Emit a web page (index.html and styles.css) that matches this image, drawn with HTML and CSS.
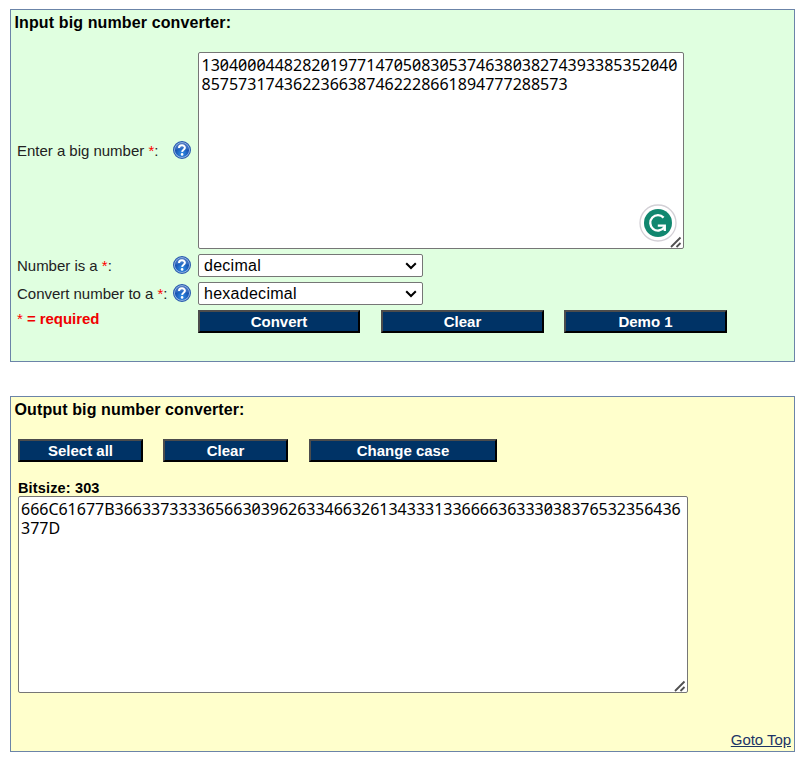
FILE: index.html
```html
<!DOCTYPE html>
<html lang="en">
<head>
<meta charset="utf-8">
<title>Big number converter</title>
<link rel="stylesheet" href="styles.css">
</head>
<body>
<svg class="defs" width="0" height="0">
  <defs>
    <radialGradient id="ball" cx="50%" cy="75%" r="70%">
      <stop offset="0" stop-color="#2f8fe8"/>
      <stop offset="1" stop-color="#0d3798"/>
    </radialGradient>
    <linearGradient id="shine" x1="0" y1="0" x2="0" y2="1">
      <stop offset="0" stop-color="#9cc4ef"/>
      <stop offset="1" stop-color="#3d7cd2"/>
    </linearGradient>
  </defs>
  <symbol id="help" viewBox="0 0 18 18">
    <circle cx="9" cy="9" r="8.4" fill="#a9c9f0" stroke="#2a5cae" stroke-width="1.2"/>
    <circle cx="9" cy="9" r="7.1" fill="url(#ball)"/>
    <path d="M2 9a7 7 0 0 1 14 0Q9 6 2 9z" fill="url(#shine)" opacity=".5"/>
    <path d="M6 7C6 3.4 12 3.5 11.9 6.8C11.8 8.8 9.2 8.7 9.1 10.9" fill="none" stroke="#fff" stroke-width="2"/>
    <circle cx="9.1" cy="13.4" r="1.3" fill="#fff"/>
  </symbol>
  <symbol id="grip" viewBox="0 0 12 12">
    <path d="M1 11L10.5 1.5M6.5 11L10.5 7" fill="none" stroke="#505050" stroke-width="1.8"/>
  </symbol>
</svg>

<form class="panel input-panel">
  <h2>Input big number converter:</h2>
  <div class="fields">
    <label class="number-label" for="number">Enter a big number <i>*</i>:</label>
    <svg class="help first"><use href="#help"/></svg>
    <div class="area">
      <textarea id="number" class="number" spellcheck="false">13040004482820197714705083053746380382743933853520408575731743622366387462228661894777288573</textarea>
      <svg class="badge" viewBox="0 0 38 38">
        <circle cx="19" cy="19" r="18" fill="#fff" stroke="#d3d0d6" stroke-width="1.3"/>
        <circle cx="19" cy="19" r="14" fill="#11876f"/>
        <path d="M24.6 13.6A7.7 7.7 0 1 0 25.2 23.4M18.8 21.6H25.8V27" fill="none" stroke="#fff" stroke-width="2.3"/>
      </svg>
      <svg class="grip"><use href="#grip"/></svg>
    </div>

    <label class="short" for="from">Number is a <i>*</i>:</label>
    <svg class="help"><use href="#help"/></svg>
    <div class="picker">
      <select id="from"><option>decimal</option></select>
      <svg class="chevron" viewBox="0 0 12 8"><path d="M1.2 1.2L6 6L10.8 1.2" fill="none" stroke="#000" stroke-width="2"/></svg>
    </div>

    <label class="short" for="to">Convert number to a <i>*</i>:</label>
    <svg class="help"><use href="#help"/></svg>
    <div class="picker">
      <select id="to"><option>hexadecimal</option></select>
      <svg class="chevron" viewBox="0 0 12 8"><path d="M1.2 1.2L6 6L10.8 1.2" fill="none" stroke="#000" stroke-width="2"/></svg>
    </div>

    <p class="required"><i>*</i> = required</p>
    <div class="actions">
      <button type="button">Convert</button>
      <button type="button">Clear</button>
      <button type="button">Demo 1</button>
    </div>
  </div>
</form>

<section class="panel output-panel">
  <h2>Output big number converter:</h2>
  <div class="tools">
    <button type="button">Select all</button>
    <button type="button">Clear</button>
    <button type="button" class="wide">Change case</button>
  </div>
  <p class="bitsize">Bitsize: 303</p>
  <div class="area result-area">
    <textarea class="result" spellcheck="false">666C61677B36633733336566303962633466326134333133666636333038376532356436377D</textarea>
    <svg class="grip"><use href="#grip"/></svg>
  </div>
  <a class="top" href="#">Goto Top</a>
</section>
</body>
</html>
```
FILE: styles.css
```css
* { box-sizing: border-box; }

body {
  margin: 0;
  padding: 9px 7px 0 10px;
  background: #fff;
  color: #000;
  font: 15px/18px "Liberation Sans", Arial, sans-serif;
}

.defs { position: absolute; }

.panel {
  display: flex;
  flex-direction: column;
  border: 1px solid #6b84a8;
}

.input-panel {
  height: 353px;
  padding: 3px;
  background: #e0ffe0;
}

.output-panel {
  height: 356px;
  margin-top: 34px;
  padding: 3px;
  background: #ffffcc;
}

h2 {
  margin: 0;
  padding-left: 0.5px;
  font-size: 16px;
  line-height: 19px;
  letter-spacing: 0.12px;
}

i { color: #f00; font-style: normal; }

.fields {
  display: grid;
  grid-template-columns: 156px 28px 1fr;
  grid-template-rows: 197px 24px 24px 24px;
  row-gap: 4px;
  align-items: center;
  margin: 20px 0 0 3px;
}

.fields label { color: #222; white-space: nowrap; letter-spacing: -0.02px; }
.fields .short { padding-top: 2px; }
.help { display: block; width: 18px; height: 18px; }
.help.first { margin-bottom: 2px; }

.area { position: relative; }

textarea {
  display: block;
  width: 100%;
  height: 197px;
  margin: 0;
  padding: 3px 2px 2px;
  border: 1px solid #767676;
  border-radius: 2px;
  background: #fff;
  color: #000;
  font: 16px/19px "Noto Sans", sans-serif;
  font-feature-settings: "zero" 1, "tnum" 1;
  word-break: break-all;
  overflow: hidden;
  resize: none;
  outline: 0;
}

.number { padding-left: 2.5px; }
.fields .area { width: 486px; margin-left: -3px; }
.result-area { width: 670px; margin-left: 4px; }
.result { letter-spacing: -0.02px; }

.grip { position: absolute; right: 2px; bottom: 1px; width: 12px; height: 12px; }
.badge { position: absolute; right: 7px; bottom: 7px; width: 38px; height: 38px; }

.picker { position: relative; width: 225px; margin-left: -3px; }

select {
  display: block;
  width: 100%;
  height: 23px;
  padding: 0 5px;
  border: 1px solid #767676;
  border-radius: 2px;
  background: #fff;
  color: #000;
  font: 16px "Liberation Sans", Arial, sans-serif;
  letter-spacing: 0.27px;
  appearance: none;
}

.chevron { position: absolute; right: 6px; top: 8px; width: 12px; height: 8px; }

.required {
  grid-column: span 2;
  margin: 0;
  padding-bottom: 4px;
  color: #f00000;
  font-weight: bold;
  letter-spacing: -0.05px;
}

.required i { font-weight: normal; }

.actions { display: flex; gap: 21px; margin-left: -3px; }

button {
  width: 162px;
  height: 23px;
  padding: 0;
  border: 2px solid;
  border-color: #4c4c4c #000 #000 #4c4c4c;
  background: #003366;
  color: #fff;
  font: bold 15px/18px "Liberation Sans", Arial, sans-serif;
}

.actions button { padding-top: 1px; }
.actions button:nth-child(n+2) { width: 163px; }
.actions button:nth-child(3) { margin-left: -1px; }

.tools { display: flex; gap: 20px; margin: 20px 0 0 4px; }
.tools button { width: 125px; }
.tools .wide { width: 188px; margin-left: 1px; }

.bitsize {
  margin: 18px 0 0 4px;
  font-size: 14.5px;
  line-height: 16px;
  font-weight: bold;
  letter-spacing: 0.15px;
}

.top {
  align-self: flex-end;
  margin-top: auto;
  color: #1c3466;
  line-height: 17px;
  letter-spacing: -0.05px;
}
```
